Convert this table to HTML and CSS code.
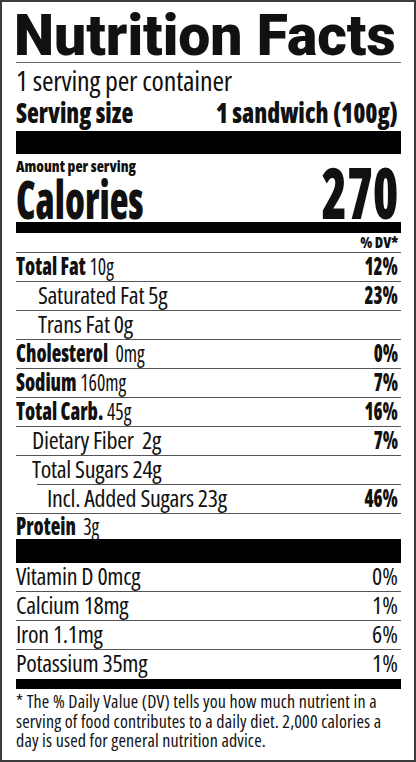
FILE: index.html
```html
<!DOCTYPE html>
<html lang="en">
<head>
<meta charset="utf-8">
<title>Nutrition Facts</title>
<link rel="stylesheet" href="styles.css">
</head>
<body>
<section class="label">
  <h1 class="title">Nutrition Facts</h1>
  <p class="servings">1 serving per container</p>
  <div class="serving-size"><span class="ss-name">Serving size</span><span class="ss-value">1 sandwich (100g)</span></div>
  <div class="bar bar-thick"></div>
  <div class="calories">
    <div class="cal-left">
      <div class="amount">Amount per serving</div>
      <div class="cal-label">Calories</div>
    </div>
    <div class="cal-value">270</div>
  </div>
  <div class="bar bar-mid"></div>
  <div class="dv-head"><span>% DV*</span></div>
  <div class="row"><span class="main"><b>Total Fat</b> 10g</span><b class="pct">12%</b></div>
  <div class="row sub-fat"><span class="sub">Saturated Fat 5g</span><b class="pct">23%</b></div>
  <div class="row sub-fat"><span class="sub">Trans Fat 0g</span></div>
  <div class="row"><span class="main"><b>Cholesterol</b>&nbsp; 0mg</span><b class="pct">0%</b></div>
  <div class="row"><span class="main"><b>Sodium</b> 160mg</span><b class="pct">7%</b></div>
  <div class="row"><span class="main"><b>Total Carb.</b> 45g</span><b class="pct">16%</b></div>
  <div class="row sub-carb"><span class="sub">Dietary Fiber&nbsp; 2g</span><b class="pct">7%</b></div>
  <div class="row sub-carb sugars"><span class="sub">Total Sugars 24g</span></div>
  <div class="row sub-added"><span class="sub">Incl. Added Sugars 23g</span><b class="pct">46%</b></div>
  <div class="row protein"><span class="main"><b>Protein</b>&nbsp; 3g</span></div>
  <div class="bar bar-protein"></div>
  <div class="row"><span class="sub">Vitamin D 0mcg</span><span>0%</span></div>
  <div class="row"><span class="sub">Calcium 18mg</span><span>1%</span></div>
  <div class="row"><span class="sub">Iron 1.1mg</span><span>6%</span></div>
  <div class="row last"><span class="sub">Potassium 35mg</span><span>1%</span></div>
  <div class="bar bar-bottom"></div>
  <p class="footnote">* The % Daily Value (DV) tells you how much nutrient in a serving of food contributes to a daily diet. 2,000 calories a day is used for general nutrition advice.</p>
</section>
</body>
</html>
```
FILE: styles.css
```css
* {
  box-sizing: border-box;
  margin: 0;
  padding: 0;
}

body {
  background: #fff;
  color: #111;
  font-family: "Open Sans", sans-serif;
  font-stretch: 75%;
}

.label {
  width: 416px;
  height: 762px;
  border: 2px solid #3c3c3c;
  padding: 0 13px 0 14px;
}

.title {
  font-family: Roboto, sans-serif;
  font-stretch: 100%;
  font-weight: 900;
  font-size: 57px;
  line-height: 53px;
  margin-top: 7px;
  text-indent: -2px;
  white-space: nowrap;
  border-bottom: 1px solid #666;
}

.servings {
  font-size: 28px;
  line-height: 32px;
  padding-top: 1px;
  letter-spacing: -0.2px;
}

.serving-size {
  display: flex;
  justify-content: space-between;
  font-weight: 800;
  font-size: 28px;
  line-height: 32px;
  padding-right: 3px;
  white-space: nowrap;
}

.ss-name {
  transform: scaleX(0.87);
  transform-origin: left center;
}

.ss-value {
  transform: scaleX(0.88);
  transform-origin: right center;
}

.bar {
  background: #000;
}

.bar-thick {
  height: 23px;
  margin-top: 3px;
}

.calories {
  display: flex;
  justify-content: space-between;
  align-items: flex-end;
  padding-right: 3px;
}

.amount {
  font-weight: 800;
  font-size: 16px;
  line-height: 18px;
  padding-top: 3px;
  white-space: nowrap;
  transform: scaleX(0.93);
  transform-origin: left center;
}

.cal-label {
  font-weight: 800;
  font-size: 53px;
  line-height: 47px;
  transform: scaleX(0.73);
  transform-origin: left center;
}

.cal-value {
  font-weight: 800;
  font-size: 71px;
  line-height: 61px;
  transform: scaleX(0.73);
  transform-origin: right center;
}

.bar-mid {
  height: 11px;
}

.dv-head {
  display: flex;
  justify-content: flex-end;
  font-weight: 800;
  font-size: 16px;
  line-height: 19px;
  padding-right: 3px;
  border-bottom: 1px solid #555;
}

.dv-head span {
  transform: scaleX(0.9);
  transform-origin: right center;
}

.row {
  display: flex;
  justify-content: space-between;
  font-size: 24px;
  line-height: 26px;
  padding-bottom: 2px;
  padding-right: 3px;
  border-bottom: 1px solid #555;
  white-space: nowrap;
}

.row b {
  font-weight: 800;
}

.main {
  transform: scaleX(0.82);
  transform-origin: left center;
}

.sub {
  letter-spacing: -0.3px;
}

.pct {
  transform: scaleX(0.76);
  transform-origin: right center;
}

.sub-fat {
  padding-left: 22px;
}

.sub-carb {
  padding-left: 16px;
}

.sub-added {
  padding-left: 31px;
}

.sugars {
  border-bottom: 0;
  padding-bottom: 3px;
  background: linear-gradient(#555, #555) right bottom / calc(100% - 21px) 1px no-repeat;
}

.protein {
  line-height: 24px;
  padding-bottom: 1px;
  border-bottom: 0;
}

.bar-protein {
  height: 24px;
}

.last {
  border-bottom: 0;
  padding-bottom: 3px;
}

.bar-bottom {
  height: 10px;
}

.footnote {
  font-size: 18px;
  font-stretch: 80%;
  letter-spacing: 0.15px;
  line-height: 19.5px;
  padding-top: 3px;
}
```
